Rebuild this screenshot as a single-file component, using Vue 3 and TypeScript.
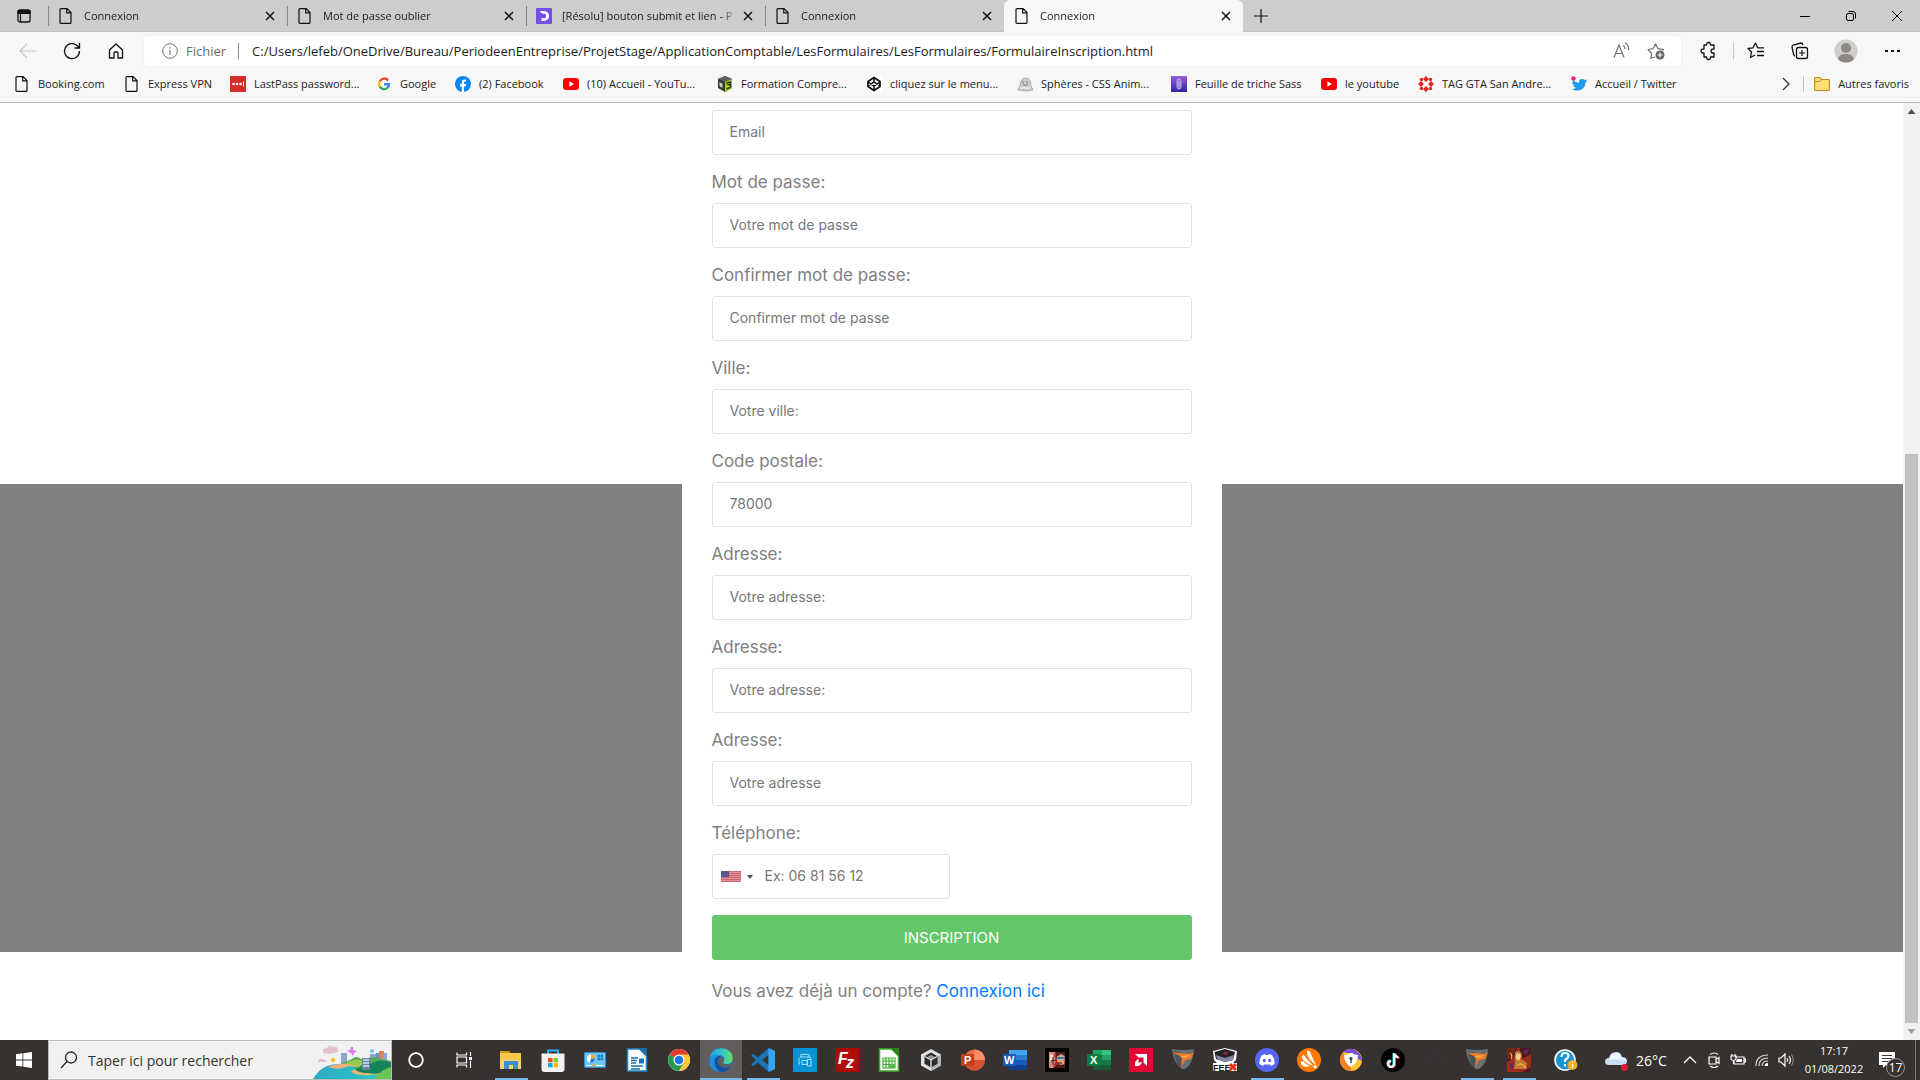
<script setup lang="ts">
import { ref } from 'vue'

interface Tab { title: string; icon: string; active?: boolean }
interface Bookmark { title: string; icon: string; width: number }
interface Field { id: string; label: string; placeholder: string; type: string }
interface TaskApp { name: string; icon: string; state?: 'open' | 'current' }

const tabs: Tab[] = [
  { title: 'Connexion', icon: 'page' },
  { title: 'Mot de passe oublier', icon: 'page' },
  { title: '[Résolu] bouton submit et lien - P', icon: 'resolu' },
  { title: 'Connexion', icon: 'page' },
  { title: 'Connexion', icon: 'page', active: true },
]

const bookmarks: Bookmark[] = [
  { title: 'Booking.com', icon: 'page', width: 110 },
  { title: 'Express VPN', icon: 'page', width: 106 },
  { title: 'LastPass password...', icon: 'lastpass', width: 146 },
  { title: 'Google', icon: 'google', width: 79 },
  { title: '(2) Facebook', icon: 'facebook', width: 108 },
  { title: '(10) Accueil - YouTu...', icon: 'youtube', width: 154 },
  { title: 'Formation Compre...', icon: 'cube', width: 149 },
  { title: 'cliquez sur le menu...', icon: 'codepen', width: 151 },
  { title: 'Sphères - CSS Anim...', icon: 'ghost', width: 154 },
  { title: 'Feuille de triche Sass', icon: 'clip', width: 150 },
  { title: 'le youtube', icon: 'youtube', width: 97 },
  { title: 'TAG GTA San Andre...', icon: 'tag', width: 153 },
  { title: 'Accueil / Twitter', icon: 'twitter', width: 120 },
]

const fields: Field[] = [
  { id: 'password', label: 'Mot de passe:', placeholder: 'Votre mot de passe', type: 'password' },
  { id: 'confirm', label: 'Confirmer mot de passe:', placeholder: 'Confirmer mot de passe', type: 'password' },
  { id: 'city', label: 'Ville:', placeholder: 'Votre ville:', type: 'text' },
  { id: 'zip', label: 'Code postale:', placeholder: '78000', type: 'text' },
  { id: 'address1', label: 'Adresse:', placeholder: 'Votre adresse:', type: 'text' },
  { id: 'address2', label: 'Adresse:', placeholder: 'Votre adresse:', type: 'text' },
  { id: 'address3', label: 'Adresse:', placeholder: 'Votre adresse', type: 'text' },
]

const apps: TaskApp[] = [
  { name: 'Explorateur de fichiers', icon: 'explorer', state: 'open' },
  { name: 'Microsoft Store', icon: 'store' },
  { name: 'Panneau de configuration', icon: 'panel' },
  { name: 'Writer', icon: 'writer' },
  { name: 'Chrome', icon: 'chrome' },
  { name: 'Edge', icon: 'edge', state: 'current' },
  { name: 'Visual Studio Code', icon: 'vscode', state: 'open' },
  { name: 'Imprimante', icon: 'printer' },
  { name: 'FileZilla', icon: 'filezilla' },
  { name: 'Calc', icon: 'calc' },
  { name: 'Unity Hub', icon: 'unity' },
  { name: 'PowerPoint', icon: 'powerpoint' },
  { name: 'Word', icon: 'word' },
  { name: 'Jeu', icon: 'hero' },
  { name: 'Excel', icon: 'excel' },
  { name: 'AMD Software', icon: 'amd' },
  { name: 'Plateforme', icon: 'shield' },
  { name: 'Feelix', icon: 'feelix' },
  { name: 'Discord', icon: 'discord', state: 'open' },
  { name: 'Avast', icon: 'avast' },
  { name: 'Avast Secure Browser', icon: 'secure' },
  { name: 'TikTok', icon: 'tiktok' },
  { name: 'Edge en arrière-plan', icon: 'faint' },
  { name: 'Plateforme', icon: 'shield', state: 'open' },
  { name: 'Dofus', icon: 'gold', state: 'open' },
]

const url = ref('C:/Users/lefeb/OneDrive/Bureau/PeriodeenEntreprise/ProjetStage/ApplicationComptable/LesFormulaires/LesFormulaires/FormulaireInscription.html')

/* 16 x 16 marks of the tabs and the favourites bar */
const small: Record<string, string> = {
  page: '<path d="M3 .6h6l4 4v9.8q0 1-1 1H3q-1 0-1-1V1.600q0-1 1-1zM8.700 .8v4h4" fill="none" stroke="#111" stroke-width="1.200"/>',
  resolu: '<rect width="16" height="16" rx="1" fill="#7450e8"/><path d="M4 3h4a5 5 0 010 10H5.500v-2.800H8a2.200 2.200 0 000-4.400Q5 5.800 4 3z" fill="#fff"/>',
  lastpass: '<rect width="16" height="16" fill="#d32d27"/><g fill="#fff"><circle cx="3.500" cy="8" r="1.300"/><circle cx="7" cy="8" r="1.300"/><circle cx="10.500" cy="8" r="1.300"/><rect x="13" y="5.500" width="1" height="5"/></g>',
  google: '<circle cx="8" cy="8" r="8" fill="#fff"/><g fill="none" stroke-width="2.400"><path d="M12.200 4.500A5 5 0 003.800 5.300" stroke="#ea4335"/><path d="M3.800 5.300a5 5 0 000 5.400" stroke="#fbbc05"/><path d="M3.800 10.700a5 5 0 007.400 1.300" stroke="#34a853"/><path d="M11.200 12A5 5 0 0013 8.200H8" stroke="#4285f4"/></g>',
  facebook: '<circle cx="8" cy="8" r="8" fill="#0c86ef"/><path d="M6.800 16v-5.600H5V8h1.800V6.300Q6.900 3.600 9.400 3.500l1.600.1v2H9.900Q9 5.600 9 6.700V8h2l-.4 2.400H9V16z" fill="#fff"/>',
  youtube: '<rect y="2" width="16" height="12" rx="3" fill="#f00"/><path d="M6.400 5.300v5.400L11 8z" fill="#fff"/>',
  cube: '<path d="M8 0l7 3v9l-7 4-7-4V3z" fill="#333b36"/><path d="M8 5l7-2v9l-7 4z" fill="#a6cf18"/><path d="M1 3l7-3 7 3-7 3z" fill="#59645d"/><path d="M2.500 6l3 2v4l-3-2z" fill="#ccd3c9"/><path d="M9.500 7l4-1v2l-2 .7 2 .4v2l-4 2" fill="none" stroke="#29301c" stroke-width="1.300"/>',
  codepen: '<path d="M0 0h16v16H0z" fill="#fff"/><path d="M8 1.500l6 4v5l-6 4-6-4v-5z" fill="none" stroke="#111" stroke-width="1.800" stroke-linejoin="round"/><path d="M8 2v4m0 4v4M2 6l6 4 6-4M2 10l6-4 6 4" fill="none" stroke="#111" stroke-width="1.500"/>',
  ghost: '<path d="M1 14q1-3 2-4 0-8 6-8 5 0 5 8l2 4q-7 2-15 0z" fill="#c9c9c9" stroke="#999" stroke-width=".7"/><path d="M5 6.500l2-1m2 0l2 1M6 8q2 3 5 0" stroke="#777" fill="none"/><path d="M3 12h11" stroke="#eee" stroke-width="1.500"/>',
  clip: '<defs><linearGradient id="clip" x2="0" y2="1"><stop stop-color="#9a61d8"/><stop offset="1" stop-color="#3024a4"/></linearGradient></defs><rect width="16" height="16" fill="url(#clip)"/><path d="M6 11V5q0-2 2-2t2 2v6q0 2-2 2t-2-2zM8 5v6" fill="#8b72dd" stroke="#c3b8f0" stroke-width=".9"/>',
  tag: '<g fill="#e52521"><path d="M8 0l3 3-3 3-3-3zM8 16l3-3-3-3-3 3zM0 8l3-3 3 3-3 3zM16 8l-3-3-3 3 3 3z"/><circle cx="3.500" cy="3.500" r="1.700"/><circle cx="12.500" cy="3.500" r="1.700"/><circle cx="3.500" cy="12.500" r="1.700"/><circle cx="12.500" cy="12.500" r="1.700"/></g>',
  twitter: '<path d="M2 4q3 3 6 3-.4-4 3-4 1.500 0 2.500 1L16 3.500 15 5l1 .2-1.600 1.500Q14 14 6.500 14.500 3 14.500 1 13q3 0 4-1.300-2.200-.5-2.800-2l1.300-.1Q1 8.500 1.100 6l1.400.5Q1 5 2 4z" fill="#1d9bf0"/><circle cx="2.500" cy="2.500" r="2.200" fill="#ec1c8b"/>',
}

/* 24 x 24 marks of the taskbar */
const big: Record<string, string> = {
  explorer: '<path d="M1 3h9l2 2.500H1z" fill="#d99a0b"/><path d="M1 5h21v16H1z" fill="#ffd45e"/><path d="M1 5h21v7H1z" fill="#fbc94a"/><path d="M5 21v-8h14v8h-5v-4h-4v4z" fill="#3c8fdc"/>',
  store: '<path d="M7 7V2.500h10V7" fill="none" stroke="#28b3f5" stroke-width="2"/><path d="M.5 5.500h23V21q0 3-3 3h-17q-3 0-3-3z" fill="#f2f2f2"/><path d="M7 10h4.500v4.300H7z" fill="#f1511b"/><path d="M12.500 10H17v4.300h-4.500z" fill="#80cc28"/><path d="M7 15h4.500v4.300H7z" fill="#00adef"/><path d="M12.500 15H17v4.300h-4.500z" fill="#fbbc09"/>',
  panel: '<rect x="1.500" y="4.500" width="21" height="15" rx="1" fill="#6cc6f4" stroke="#2e8fce"/><circle cx="8" cy="10.500" r="4" fill="#fff"/><path d="M8 10.500V6.500a4 4 0 014 4z" fill="#f7a51f"/><path d="M8 10.500l4 0a4 4 0 01-5 3.900z" fill="#1c76bd"/><path d="M14 8h6M14 11h6M16 6.500v6M19 6.500v6" stroke="#0d6bad"/><path d="M4 17.500h16" stroke="#fff"/><path d="M9 17.500h4" stroke="#f7a51f" stroke-width="1.500"/>',
  writer: '<path d="M2.500 1h12l7 7v15h-19z" fill="#fff" stroke="#1f82c4" stroke-width="1.600"/><path d="M14 0h8v8z" fill="#1b6a9f"/><path d="M6 10h7M6 12.500h6M6 15h5M6 18h12M6 21h9" stroke="#1d70ad" stroke-width="1.300"/><path d="M14 10.500h5v5h-5z" fill="#1d70ad"/>',
  chrome: '<circle cx="12" cy="12" r="11" fill="#fff"/><path d="M12 12L2.500 6.500a11 11 0 0119 0z" fill="#e33b2e"/><path d="M12 12L2.500 6.500A11 11 0 0012 23l5-8z" fill="#229b4c"/><path d="M12 6.500h9.500A11 11 0 0112 23l5-8z" fill="#fcc934"/><circle cx="12" cy="12" r="5.500" fill="#fff"/><circle cx="12" cy="12" r="4.300" fill="#2276e3"/>',
  edge: '<defs><linearGradient id="edgeA" x2="1"><stop stop-color="#269de0"/><stop offset=".6" stop-color="#35c8cb"/><stop offset="1" stop-color="#6edc55"/></linearGradient></defs><circle cx="12" cy="12" r="11.800" fill="#176fc0"/><path d="M.3 11Q2 0 12 .2q11 .5 11.700 9.800 0 6-6 6-4 0-4-2 2-1 1-4-1-3-5-3-6 0-9.400 4z" fill="url(#edgeA)"/><path d="M13.500 10q-4-1-5 2-.5 5 4 7.500 4 2 9-1.500-4 7-11 5.700Q4 22 2.500 14q0-6 6-7 6-.5 6.500 4-.5-1-1.500-1z" fill="#1455a1"/><path d="M14 10q-1-2-4-2-5 1-4.500 7 1 6 6.500 8.600-9 .4-11.500-7.600Q-.5 9 6 7q8-1.500 9 4z" fill="#268ce0"/><path d="M14 14.500q2.500-3 0-5-5-1-5.500 3.500.5 5 5.500 6.500 5 .8 9-2l2-3q-3 2.500-7 2-4-.5-4-2z" fill="#615e5e"/><path d="M8.500 12q-.5 5 4 7.500 5 2 10-1.500-4 6-10 5.900-6-2-6-7 0-3 2-4.900z" fill="#1455a1"/>',
  vscode: '<path d="M17.500 0L24 3v18l-6.500 3L7 14.500 2.500 18 0 16.500 5 12 0 7.500 2.500 6 7 9.500z" fill="#1976bd"/><path d="M17.500 7L11 12l6.500 5z" fill="#373130"/><path d="M17.500 0L24 3v18l-6.500 3z" fill="#34a9ef"/>',
  printer: '<rect width="24" height="24" fill="#0593d3"/><path d="M8 9V6.500h8V9M6.500 9H16q2 0 2 2M7 16H6V10M9 12.500h5v4H9zM14.500 11.500h3.500v6.500h-3.500z" fill="none" stroke="#b5e5fb" stroke-width=".9"/>',
  filezilla: '<path d="M0 0h24v24H0z" fill="#b30d0b"/><rect x="1" y="1" width="22" height="22" fill="none" stroke="#7e0807" stroke-dasharray="1 1"/><text x="3" y="16" font-family="Liberation Sans" font-size="16" font-weight="700" font-style="italic" fill="#fff">F</text><text x="11" y="20" font-family="Liberation Sans" font-size="16" font-weight="700" font-style="italic" fill="#fff">z</text>',
  calc: '<path d="M2.500 1h12l7 7v15h-19z" fill="#fff" stroke="#3cac2c" stroke-width="1.600"/><path d="M14 0h8v8z" fill="#277e1b"/><path d="M6 10h12v10H6zM6 13h12M6 16.500h12M9 10v10M12 10v10M15 10v10" fill="none" stroke="#3cac2c" stroke-width="1.200"/><path d="M12 16h6v4h-6z" fill="#58b84a"/>',
  unity: '<path d="M12 1l10 5.500v11L12 23 2 17.500v-11z" fill="#e0e0e0"/><path d="M12 12l10-5.500v11L12 23z" fill="#b5b5b5"/><path d="M12 4.500l6.500 3.700v7.600L12 19.500l-6.500-3.700V8.200z" fill="#2b2b2b"/><path d="M12 7l4 2-4 2.500L8 9z" fill="#999"/><path d="M12 12v7M12 12L6 8.500m6 3.500l6-3.500" stroke="#ddd" stroke-width="1.400"/>',
  powerpoint: '<circle cx="13.500" cy="12" r="10.500" fill="#ed6c47"/><path d="M13.500 1.500A10.500 10.500 0 0124 12H13.500z" fill="#ff8f6b"/><path d="M3 12h21a10.500 10.500 0 01-21 0z" fill="#d35230"/><rect y="6" width="13" height="12" rx="1" fill="#c43e1c"/><text x="3" y="16" font-family="Liberation Sans" font-size="11" font-weight="700" fill="#fff">P</text>',
  word: '<path d="M6 2h18v5H6z" fill="#41a5ee"/><path d="M6 7h18v5H6z" fill="#2b7cd3"/><path d="M6 12h18v5H6z" fill="#185abd"/><path d="M6 17h18v5H6z" fill="#103f91"/><rect y="6" width="13" height="12" rx="1" fill="#185abd"/><text x="1" y="16" font-family="Liberation Sans" font-size="11" font-weight="700" fill="#fff">W</text>',
  excel: '<path d="M6 2h9v5H6z" fill="#21a366"/><path d="M15 2h9v5h-9z" fill="#33c481"/><path d="M6 7h9v10H6z" fill="#107c41"/><path d="M15 7h9v5h-9z" fill="#21a366"/><path d="M15 12h9v5h-9z" fill="#107c41"/><path d="M6 17h18v5H6z" fill="#185c37"/><rect y="6" width="13" height="12" rx="1" fill="#107c41"/><text x="3" y="16" font-family="Liberation Sans" font-size="11" font-weight="700" fill="#fff">X</text>',
  hero: '<path d="M0 0h24v24H0z"/><path d="M4 4h16v16H4z" fill="#a52f2a"/><path d="M4 4h6l-1 4 2 4-3 8H4z" fill="#d98b7c"/><path d="M5 6l3 1v4l-3 2z" fill="#f0ded0"/><path d="M12 7l5-2 3 4-1 7-4 1-3-4z" fill="#e0a17a"/><path d="M11 4h9v4l-4-2-5 3z" fill="#4a1f22"/><path d="M12 9h8v2h-8z" fill="#2a7fa8"/><path d="M8 9v8M6 13l5-1M13 15l4 0M9 20l4-3 7 1v2z" stroke="#3b1518" fill="#52201f"/>',
  amd: '<path d="M0 0h24v24H0z" fill="#df0a35"/><path d="M6 6h12v12l-3.500-3.500v-5h-5z" fill="#fff"/><path d="M9.500 10.500l-3.500 3.500v4h4l3.500-3.500h-4z" fill="#fff"/>',
  shield: '<path d="M1 1q11 2 22 0-1 15-9 20h-3Q2 15 1 1z" fill="#687075"/><path d="M3 3l8 2-1 16Q4 14 3 3z" fill="#48555c"/><path d="M1.500 4.500L20 6l3-2-3 7-6 1-4 8 1-9-2-3z" fill="#f47b20"/><path d="M9 8l11-1-7 3z" fill="#ffaf58"/>',
  feelix: '<path d="M0 3l12-3 12 3-1 9-3 3H4l-3-3z" fill="#fff"/><path d="M1.500 4L12 1l10 3-2 8-8 2-9-3z" fill="#232129"/><path d="M3 7l9 3 9-3-1 5-8 2-8-3z" fill="#8485a0"/><path d="M9 5l6-1-2 3z" fill="#be252b"/><path d="M0 15h24v8H0z" fill="#fff"/><text x="0" y="23" font-family="Liberation Sans" font-size="9" font-weight="700" fill="#17171b">FEE</text><path d="M17 16l6 6m0-6l-6 6" stroke="#f22e1d" stroke-width="3"/>',
  discord: '<circle cx="12" cy="12" r="12" fill="#5865f2"/><path d="M7 7l3-1 .5 1h3L14 6l3 1q3 4 2.500 9L16 18l-1-1.500H9L8 18l-3.500-2Q4 11 7 7z" fill="#fff"/><ellipse cx="9.300" cy="12.500" rx="1.500" ry="1.700" fill="#5865f2"/><ellipse cx="14.700" cy="12.500" rx="1.500" ry="1.700" fill="#5865f2"/>',
  avast: '<circle cx="12" cy="12" r="12" fill="#ff7800"/><path d="M10 3q2-1 3 1l6 13Q9 10 10 3zM5 10q-1-3 2-3 3 5 10 11Q7 15 5 10zM4 16q-1-3 2-3 3 4 7 5-7 2-9-2zM18 17q2 0 2 3-3 1-4-1z" fill="#fff"/>',
  secure: '<circle cx="12" cy="12" r="11" fill="#ffc22e"/><path d="M12 23Q4 22 1 14q0-6 3-10l8 14z" fill="#f6821f"/><path d="M4 4q8-7 16 1 3 4 3 8l-6-3-3-5H8z" fill="#7852dd"/><path d="M12 5q4 2 7 2 0 8-7 12-7-4-7-12 3 0 7-2z" fill="#fff"/><circle cx="12" cy="10.500" r="1.600" fill="#333955"/><path d="M11.300 11h1.400v4h-1.400z" fill="#333955"/>',
  tiktok: '<circle cx="12" cy="12" r="12"/><path d="M12.500 5v10.500a3 3 0 11-3-3" fill="none" stroke="#25f4ee" stroke-width="2"/><path d="M14.500 6.500q1 3 4 3.500M14 6v10.500a3 3 0 11-4-3" fill="none" stroke="#fe2c55" stroke-width="2"/><path d="M13.200 5.500v10.500a3 3 0 11-3-3M13.500 5.500q.5 3.500 4 4" fill="none" stroke="#fff" stroke-width="2"/>',
  faint: '<path d="M4 15q1-8 8-9 6 0 9 4M3 12h13" fill="none" stroke="#303942" stroke-width="2.500" opacity=".4"/>',
  gold: '<path d="M0 0h24v24H0z" fill="#4f1820"/><path d="M0 0h9l-3 8-6 4z" fill="#6d2a18"/><path d="M0 14q8-4 10-14h3q-1 8 4 10l7-4v13l-9 5H0z" fill="#a02c1b"/><path d="M8 4q5-3 7 2l-1 5 6 4-1 6H7l1-9z" fill="#c07a34"/><path d="M9 6q4-2 5 2l-2 5-3-2z" fill="#f3cf8c"/><path d="M16 3l6-2-3 7zM2 17l5-3-2 8z" fill="#5a2a6a"/><path d="M10 18q4-5 9 2M3 5q3 2 1 6" stroke="#ffb040" stroke-width="1.200" fill="none"/>',
}
</script>

<template>
  <div class="screen">
    <nav class="tabstrip" aria-label="Onglets">
      <button class="tab-menu" type="button" aria-label="Menu des onglets">
        <svg viewBox="0 0 16 16" width="16" height="16"><rect x="2" y="2" width="12" height="12" rx="2" fill="none" stroke="#111" stroke-width="1.300" /><path d="M2 2.500h12v3H2zM4.500 5v9" stroke="#111" fill="#111" stroke-width="1.200" /></svg>
      </button>
      <div v-for="(tab, i) in tabs" :key="i" class="tab" :class="{ active: tab.active }">
        <svg class="mark" viewBox="0 0 16 16" v-html="small[tab.icon]" />
        <button class="tab-title" type="button">{{ tab.title }}</button>
        <button class="tab-close" type="button" aria-label="Fermer l'onglet">
          <svg viewBox="0 0 10 10" width="10" height="10"><path d="M1 1l8 8m0-8L1 9" stroke="#111" stroke-width="1.500" /></svg>
        </button>
      </div>
      <button class="new-tab" type="button" aria-label="Nouvel onglet">
        <svg viewBox="0 0 14 14" width="14" height="14"><path d="M7 0v14M0 7h14" stroke="#111" stroke-width="1.200" /></svg>
      </button>
      <div class="window-controls">
        <button type="button" aria-label="Réduire"><svg viewBox="0 0 10 10" width="10" height="10"><path d="M0 5.500h10" stroke="#000" /></svg></button>
        <button type="button" aria-label="Restaurer"><svg viewBox="0 0 10 10" width="10" height="10"><rect x=".5" y="2.500" width="7" height="7" rx="1.500" fill="none" stroke="#000" /><path d="M2.500 .5H7q2.500 0 2.500 2.500v4.500" fill="none" stroke="#000" /></svg></button>
        <button type="button" aria-label="Fermer"><svg viewBox="0 0 10 10" width="10" height="10"><path d="M0 0l10 10M10 0L0 10" stroke="#000" /></svg></button>
      </div>
    </nav>

    <div class="toolbar">
      <button class="tool" type="button" aria-label="Précédent"><svg viewBox="0 0 20 20" width="20" height="20"><path d="M18 10H2m7-7l-7 7 7 7" fill="none" stroke="#c8c8c8" stroke-width="1.200" /></svg></button>
      <button class="tool" type="button" aria-label="Actualiser"><svg viewBox="0 0 20 20" width="20" height="20"><path d="M17.500 10A7.500 7.500 0 1115 4.500l2 2M17.500 2v5h-5" fill="none" stroke="#111" stroke-width="1.300" /></svg></button>
      <button class="tool" type="button" aria-label="Accueil"><svg viewBox="0 0 20 20" width="20" height="20"><path d="M3.500 9L10 3l6.500 6v8h-4.500v-5q0-1-1-1h-2q-1 0-1 1v5H3.500z" fill="none" stroke="#111" stroke-width="1.300" stroke-linejoin="round" /></svg></button>
      <div class="address">
        <svg viewBox="0 0 16 16" width="16" height="16"><circle cx="8" cy="8" r="7.300" fill="none" stroke="#777" /><path d="M8 7v5M8 4v1.500" stroke="#777" stroke-width="1.200" /></svg>
        <span class="scheme">Fichier</span>
        <input v-model="url" class="url" type="text" aria-label="Adresse" spellcheck="false">
        <button class="inline-tool" type="button" aria-label="Lecture à voix haute"><svg viewBox="0 0 18 18" width="18" height="18"><path d="M2 15.500L7 3l5 12.500M4 11.500h6M11 3.500q2 1 2 3.500M13 1q4 2 3.500 7" fill="none" stroke="#707070" stroke-width="1.200" /></svg></button>
        <button class="inline-tool" type="button" aria-label="Ajouter aux favoris"><svg viewBox="0 0 18 18" width="18" height="18"><path d="M8 15l-4 1.500.6-5L1 7.500l5-.8L8.500 2 11 6.700l5.500.8-1.500 1" fill="none" stroke="#707070" stroke-width="1.200" stroke-linejoin="round" /><circle cx="13" cy="13" r="4.500" fill="#666" /><path d="M13 10.500v5M10.500 13h5" stroke="#fff" stroke-width="1.200" /></svg></button>
      </div>
      <button class="tool" type="button" aria-label="Extensions"><svg viewBox="0 0 20 20" width="20" height="20"><path d="M5 4h2.500q-.2-2.500 2-2.500t2 2.500H15v4q-3-.2-3 2t3 2v4h-3.500q.2 2.500-2 2.500t-2-2.500H5v-4q-3 .2-3-2t3-2z" fill="none" stroke="#111" stroke-width="1.300" stroke-linejoin="round" /></svg></button>
      <span class="divider tool-divider" />
      <button class="tool" type="button" aria-label="Favoris"><svg viewBox="0 0 20 20" width="20" height="20"><path d="M9 14l-4.500 2.500 1-5.500L2 7.500l5-.7L9.500 2l2.200 4.800H18M11 10.500h7M11 14.500h7" fill="none" stroke="#111" stroke-width="1.300" stroke-linejoin="round" /></svg></button>
      <button class="tool" type="button" aria-label="Collections"><svg viewBox="0 0 20 20" width="20" height="20"><path d="M5 15q-1 0-1.500-2L2 6q0-1.500 1-2l8-2q1.500 0 2 2" fill="none" stroke="#111" stroke-width="1.300" /><rect x="6.500" y="6.500" width="11" height="11" rx="2" fill="none" stroke="#111" stroke-width="1.300" /><path d="M12 9v6M9 12h6" stroke="#111" stroke-width="1.200" /></svg></button>
      <button class="tool profile" type="button" aria-label="Profil"><svg viewBox="0 0 24 24" width="24" height="24"><circle cx="12" cy="12" r="11.500" fill="#d0cecb" /><circle cx="12" cy="9" r="5" fill="#8d8986" /><path d="M4 20q1-5 8-5t8 5q-3 3.500-8 3.500T4 20z" fill="#8d8986" /></svg></button>
      <button class="tool" type="button" aria-label="Paramètres et plus"><svg viewBox="0 0 20 20" width="20" height="20"><path d="M3 9h3v2H3zM9 9h3v2H9zM15 9h3v2h-3z" fill="#111" /></svg></button>
    </div>

    <nav class="bookmarks" aria-label="Favoris">
      <a v-for="mark in bookmarks" :key="mark.title" href="#" :style="{ flexBasis: mark.width + 'px' }">
        <svg class="mark" viewBox="0 0 16 16" v-html="small[mark.icon]" />
        <span>{{ mark.title }}</span>
      </a>
      <button class="more" type="button" aria-label="Plus de favoris"><svg viewBox="0 0 8 14" width="8" height="14"><path d="M1 1l6 6-6 6" fill="none" stroke="#333" stroke-width="1.300" /></svg></button>
      <span class="divider" />
      <a class="others" href="#">
        <svg class="mark" viewBox="0 0 16 16"><path d="M.6 2.500q0-1 1-1h4l2 2h6.800q1 0 1 1v9q0 1-1 1H1.600q-1 0-1-1z" fill="#ffdd7e" stroke="#bf8d13" stroke-width="1.100" /><path d="M1 5.500h4.500l2-2" stroke="#bf8d13" fill="none" /></svg>
        <span>Autres favoris</span>
      </a>
    </nav>

    <div class="viewport">
      <main class="page">
        <form class="card" @submit.prevent>
          <input class="control" type="email" placeholder="Email" aria-label="Email">
          <div v-for="field in fields" :key="field.id" class="group">
            <label :for="field.id">{{ field.label }}</label>
            <input :id="field.id" class="control" :type="field.type" :placeholder="field.placeholder">
          </div>
          <div class="group">
            <label for="phone">Téléphone:</label>
            <div class="control phone">
              <button class="country" type="button" aria-label="Pays">
                <svg viewBox="0 0 20 11" width="20" height="11"><path d="M0 0h20v11H0z" fill="#e0929a" /><path d="M0 .5h20M0 2.500h20M0 4.500h20M0 6.500h20M0 8.500h20M0 10.500h20" stroke="#cf6673" /><path d="M0 0h8v6H0z" fill="#5a5a8c" /></svg>
                <svg viewBox="0 0 6 4" width="6" height="4"><path d="M0 0h6L3 4z" fill="#555" /></svg>
              </button>
              <input id="phone" type="tel" placeholder="Ex: 06 81 56 12">
            </div>
          </div>
          <button class="submit" type="submit">INSCRIPTION</button>
          <p class="signin">Vous avez déjà un compte? <a href="#">Connexion ici</a></p>
        </form>
      </main>
      <div class="scrollbar" aria-hidden="true">
        <svg viewBox="0 0 17 17" width="17" height="17"><path d="M4.500 11l4-5 4 5z" fill="#505050" /></svg>
        <div class="track"><div class="thumb" /></div>
        <svg viewBox="0 0 17 17" width="17" height="17"><path d="M4.500 6l4 5 4-5z" fill="#a3a3a3" /></svg>
      </div>
    </div>

    <footer class="taskbar">
      <button class="start" type="button" aria-label="Démarrer"><svg viewBox="0 0 16 16" width="16" height="16"><path d="M0 2.200l6.500-.9v6.200H0zM7.300 1.200L16 0v7.500H7.300zM0 8.400h6.500v6.200L0 13.700zM7.300 8.400H16V16l-8.700-1.200z" fill="#fff" /></svg></button>
      <div class="search">
        <svg class="lens" viewBox="0 0 18 18" width="18" height="18"><circle cx="11" cy="6.500" r="5.500" fill="none" stroke="#222" stroke-width="1.300" /><path d="M7 10.500L1 17" stroke="#222" stroke-width="1.300" /></svg>
        <input type="search" placeholder="Taper ici pour rechercher" aria-label="Taper ici pour rechercher">
        <svg class="scene" viewBox="0 0 78 38" width="78" height="38" aria-hidden="true">
          <defs><linearGradient id="sea" x2="1"><stop stop-color="#2fa7c4" /><stop offset="1" stop-color="#29d0c8" /></linearGradient></defs>
          <path d="M10 12q-1-5 4-5 2-4 6-1 6-1 5 5-7 3-15 1zM5 21q1-4 4-3 4 0 5 3z" fill="#e3c3cb" />
          <circle cx="20" cy="19" r="2" fill="#ffb30d" /><circle cx="59" cy="10" r="2" fill="#64d1ea" />
          <path d="M38 6l2 0 0 3 4 1-3 2-1 3-2-3-4-2 3-1z" fill="#d57af0" />
          <path d="M28 12h6v12h-6zM57 13h6v10h-6z" fill="#91a4ca" /><path d="M63 12h4v10h-4z" fill="#5e99c7" /><path d="M66 10h5v12h-5z" fill="#dd8056" /><path d="M70 12h4v10h-4z" fill="#8ea6d3" />
          <path d="M18 26q13-4 21-8 4-4 9 0l13-2 17 4v18H18z" fill="#54a858" />
          <path d="M35 21q10-5 17 0l-6 5H28z" fill="#9cc950" />
          <path d="M0 38Q9 22 28 23q9 0 13 3-3 4 11 4l26-2v10z" fill="url(#sea)" />
          <path d="M15 26q14-6 28-1-10 0-13 2-7 2-15-1z" fill="#efb17d" />
          <path d="M38 30q8-4 18-5l15-5 7 5v6q-14 4-28 3-10 0-12-4z" fill="#e7b77a" />
          <path d="M42 28q9-4 17-6 9-5 19 0v8q-13 4-24 2-9 0-12-4z" fill="#14845a" />
          <path d="M49 17h8v12h-8z" fill="#6585a8" /><path d="M50 19h6M50 22h6M50 25h6" stroke="#dbe2ed" stroke-width="1.300" />
          <path d="M61 38q8-10 17-12v12z" fill="#69c553" />
        </svg>
      </div>
      <button class="wide" type="button" aria-label="Cortana"><svg viewBox="0 0 16 16" width="16" height="16"><circle cx="8" cy="8" r="6.800" fill="none" stroke="#fff" stroke-width="1.800" /></svg></button>
      <button class="wide" type="button" aria-label="Affichage des tâches"><svg viewBox="0 0 16 16" width="16" height="16"><path d="M1 .5v2.500h9.500V.5M1 15.500V13h9.500v2.500M1 5h9.500v6H1zM14.500 0v4M14.500 9v7" fill="none" stroke="#fff" stroke-width="1.200" /><path d="M13 5h3v3h-3z" fill="#fff" /></svg></button>
      <div class="apps">
        <button v-for="(app, i) in apps" :key="i" class="app" :class="app.state" type="button" :aria-label="app.name">
          <svg viewBox="0 0 24 24" width="24" height="24" v-html="big[app.icon]" />
        </button>
      </div>
      <div class="tray">
        <button class="help" type="button" aria-label="Assistance"><svg viewBox="0 0 24 24" width="24" height="24"><circle cx="11" cy="12" r="10" fill="#1595d4" stroke="#fff" stroke-width="1.600" /><path d="M7.500 9q0-4 3.500-4t3.500 3q0 2-2 3t-1.500 3M11 16v2.500" fill="none" stroke="#fff" stroke-width="2.200" /><circle cx="18.500" cy="17" r="5" fill="#f5af22" /><path d="M18.500 16v4M18.500 13.500v1.500" stroke="#fff" stroke-width="1.500" /></svg></button>
        <button class="weather" type="button">
          <svg viewBox="0 0 24 24" width="24" height="24"><path d="M5 17Q1 17 1 13.500t4-3.500q1-6 7-6 5 0 6 5 5 0 5 4t-4 4z" fill="#c8ddf5" /><path d="M5 12q2-7 8-7 4 1 4 5 4 0 5 3-9-3-17-1z" fill="#eef5fd" /><circle cx="20.500" cy="19.500" r="3.500" fill="#e01b38" /></svg>
          <span>26°C</span>
        </button>
        <button class="status" type="button" aria-label="Icônes cachées"><svg viewBox="0 0 16 16" width="16" height="16"><path d="M2 11l6-6 6 6" fill="none" stroke="#fff" stroke-width="1.300" /></svg></button>
        <button class="status" type="button" aria-label="Caméra"><svg viewBox="0 0 16 16" width="16" height="16"><path d="M4 2.500q4-3 8 0M4 14q4 3 8 0M3 5h7v7H3zM10 7.500l3-2v6l-3-2" fill="none" stroke="#fff" stroke-width="1.200" /></svg></button>
        <button class="status" type="button" aria-label="Batterie"><svg viewBox="0 0 16 16" width="16" height="16"><path d="M5 5h9v7H4V9M14 7h1.500v3H14M1 4h5v3q-1 1.500-2.500 1.500T1 7zM2 4V2m3 2V2M3.500 8v4" fill="none" stroke="#fff" stroke-width="1.200" /><path d="M7 7h5v3H6z" fill="#fff" /></svg></button>
        <button class="status" type="button" aria-label="Wi-Fi"><svg viewBox="0 0 16 16" width="16" height="16"><path d="M2 14Q2 3 14 3M5 14q0-8 9-8M8 14q0-5 6-5" fill="none" stroke="#ddd" stroke-width="1.200" /><path d="M10.500 14q0-3 3.500-3v3z" fill="#fff" /></svg></button>
        <button class="status" type="button" aria-label="Volume"><svg viewBox="0 0 16 16" width="16" height="16"><path d="M1 6h2l4-4v12l-4-4H1zM9 6q1.500 2 0 4M11 4q3 4 0 8" fill="none" stroke="#fff" stroke-width="1.200" /><path d="M13.500 2.500q3.500 5.500 0 11" fill="none" stroke="#999" /></svg></button>
        <button class="clock" type="button"><time>17:17</time><time>01/08/2022</time></button>
        <button class="notices" type="button" aria-label="17 notifications">
          <svg viewBox="0 0 18 16" width="18" height="16"><path d="M0 0h16v13H7l-3 3v-3H0z" fill="#fff" /><path d="M3 3.500h10M3 6.500h10M3 9.500h6" stroke="#3a3432" /></svg>
          <span class="badge">17</span>
        </button>
      </div>
    </footer>
  </div>
</template>

<style>
body {
  margin: 0;
  background: #fff;
}
</style>

<style scoped>
.screen {
  display: flex;
  flex-direction: column;
  min-height: 100vh;
  overflow: hidden;
  color: #1b1b1b;
  font-family: "Open Sans", "Noto Sans", sans-serif;
  font-size: 11px;
}
*,
*::before,
*::after {
  box-sizing: border-box;
}
button,
input {
  margin: 0;
  padding: 0;
  border: 0;
  background: none;
  color: inherit;
  font: inherit;
  outline: none;
}
button {
  display: flex;
  align-items: center;
  justify-content: center;
  flex: none;
}
svg {
  display: block;
  flex: none;
}
a {
  color: inherit;
  text-decoration: none;
}
.mark {
  width: 16px;
  height: 16px;
}
.divider {
  width: 1px;
  height: 16px;
  background: #c4c4c4;
}

.tabstrip {
  display: flex;
  height: 32px;
  background: #cdcdcd;
  box-shadow: inset 0 -1px 0 #c2c2c2;
}
.tab-menu {
  width: 48px;
}
.tab {
  display: flex;
  align-items: center;
  flex: 0 1 239px;
  min-width: 0;
  padding: 0 8px 0 10px;
  position: relative;
}
.tab:not(.active)::before {
  content: "";
  position: absolute;
  left: 0;
  top: 6px;
  width: 1px;
  height: 20px;
  background: #858585;
}
.tab.active {
  background: #f7f7f7;
  border-radius: 6px 6px 0 0;
}
.tab-title {
  flex: 1;
  justify-content: flex-start;
  min-width: 0;
  margin-left: 10px;
  padding-bottom: 2px;
  overflow: hidden;
  white-space: nowrap;
  mask-image: linear-gradient(to right, #000 calc(100% - 16px), transparent calc(100% - 4px));
}
.tab-close {
  width: 18px;
  height: 18px;
}
.new-tab {
  width: 36px;
}
.window-controls {
  display: flex;
  margin-left: auto;
}
.window-controls button {
  width: 46px;
}

.toolbar {
  display: flex;
  align-items: center;
  height: 38px;
  padding: 0 6px;
  background: #f7f7f7;
}
.tool {
  width: 44px;
  height: 30px;
}
.tool.profile {
  width: 48px;
}
.tool-divider {
  margin-left: 2px;
}
.address {
  display: flex;
  align-items: center;
  flex: 1;
  min-width: 0;
  height: 30px;
  margin: 0 6px;
  padding: 0 8px 0 18px;
  border-radius: 4px;
  background: #fff;
  box-shadow: 0 0 2px #e6e6e6;
  font-size: 13px;
}
.scheme {
  margin-left: 8px;
  padding-right: 12px;
  border-right: 1px solid #8a8a8a;
  color: #6b6b6b;
  line-height: 16px;
}
.url {
  flex: 1;
  min-width: 0;
  height: 30px;
  padding-left: 13px;
}
.inline-tool {
  width: 35px;
  height: 30px;
}

.bookmarks {
  display: flex;
  align-items: center;
  height: 33px;
  padding: 0 11px 5px 14px;
  border-bottom: 1px solid #bcbcbc;
  background: #f7f7f7;
}
.bookmarks a {
  display: flex;
  align-items: center;
  gap: 8px;
  min-width: 0;
  white-space: nowrap;
}
.more {
  width: 24px;
  height: 24px;
  margin-left: auto;
  margin-right: 5px;
}
.bookmarks .others {
  margin-left: 10px;
}

.viewport {
  display: flex;
  flex: 1;
}
/* The grey band stays behind the card, which overflows it above and below. */
.page {
  display: flex;
  justify-content: center;
  flex: 1;
  min-width: 0;
  background: linear-gradient(#808080, #808080) 0 381px / 100% 468px no-repeat;
  color: #808080;
  font-family: Inter, "Open Sans", sans-serif;
  font-size: 17px;
  line-height: 24px;
}
.card {
  width: 540px;
  padding: 7px 30px 37px;
  background: #fff;
}
.group {
  padding-top: 15px;
}
.group label {
  display: block;
  margin-bottom: 9px;
}
.control {
  display: block;
  width: 100%;
  height: 45px;
  padding: 0 17px 2px;
  border: 1px solid #e3e3e3;
  border-radius: 3px;
  background: #fff;
  font-size: 14px;
}
.control::placeholder,
.phone input::placeholder {
  color: #777;
  opacity: 1;
}
.phone {
  display: flex;
  align-items: center;
  width: 238px;
  padding: 0;
}
.country {
  gap: 6px;
  height: 43px;
  padding: 0 12px 0 8px;
}
.phone input {
  flex: 1;
  min-width: 0;
  height: 43px;
  padding-bottom: 2px;
}
.submit {
  width: 100%;
  height: 45px;
  margin-top: 16px;
  border-radius: 3px;
  background: #63c76a;
  color: #fff;
  font-size: 15px;
}
.signin {
  margin: 19px 0 0;
}
.signin a {
  color: #007bff;
}
.scrollbar {
  display: flex;
  flex-direction: column;
  width: 17px;
  background: #f1f1f1;
}
.track {
  display: flex;
  align-items: flex-end;
  justify-content: center;
  flex: 1;
}
.thumb {
  width: 13px;
  height: 63%;
  background: #c1c1c1;
}

.taskbar {
  display: flex;
  height: 40px;
  background: #373130;
  color: #fff;
}
.start,
.wide {
  width: 48px;
}
.search {
  display: flex;
  align-items: center;
  flex: 0 0 344px;
  padding-left: 11px;
  border: 1px solid #bbb;
  background: #f1f1f1;
  color: #222;
  font-size: 14px;
}
.search input {
  flex: 1;
  min-width: 0;
  height: 38px;
  margin-left: 10px;
}
.search input::placeholder {
  color: #333;
  opacity: 1;
}
.apps {
  display: flex;
  margin-left: 2px;
}
.app {
  width: 42px;
  border-bottom: 2px solid transparent;
  border-top: 2px solid transparent;
}
.app.open {
  background: linear-gradient(#76b9ed, #76b9ed) 50% 100% / 33px 2px no-repeat border-box;
}
.app.current {
  border-bottom-color: #76b9ed;
  background: #625e5d;
}
.tray {
  display: flex;
  margin-left: auto;
  padding-right: 4px;
}
.help {
  width: 44px;
  margin-right: 16px;
}
.weather {
  justify-content: flex-start;
  gap: 8px;
  width: 74px;
  font-size: 14px;
}
.status {
  width: 24px;
}
.clock {
  flex-direction: column;
  width: 72px;
  font-size: 11px;
  line-height: 18px;
}
.notices {
  width: 46px;
  padding-right: 10px;
  border-right: 1px solid #777;
  position: relative;
}
.badge {
  position: absolute;
  left: 16px;
  top: 18px;
  width: 19px;
  height: 19px;
  border: 1px solid #999;
  border-radius: 50%;
  background: #373130;
  font-size: 12px;
  line-height: 17px;
  text-align: center;
}
</style>
